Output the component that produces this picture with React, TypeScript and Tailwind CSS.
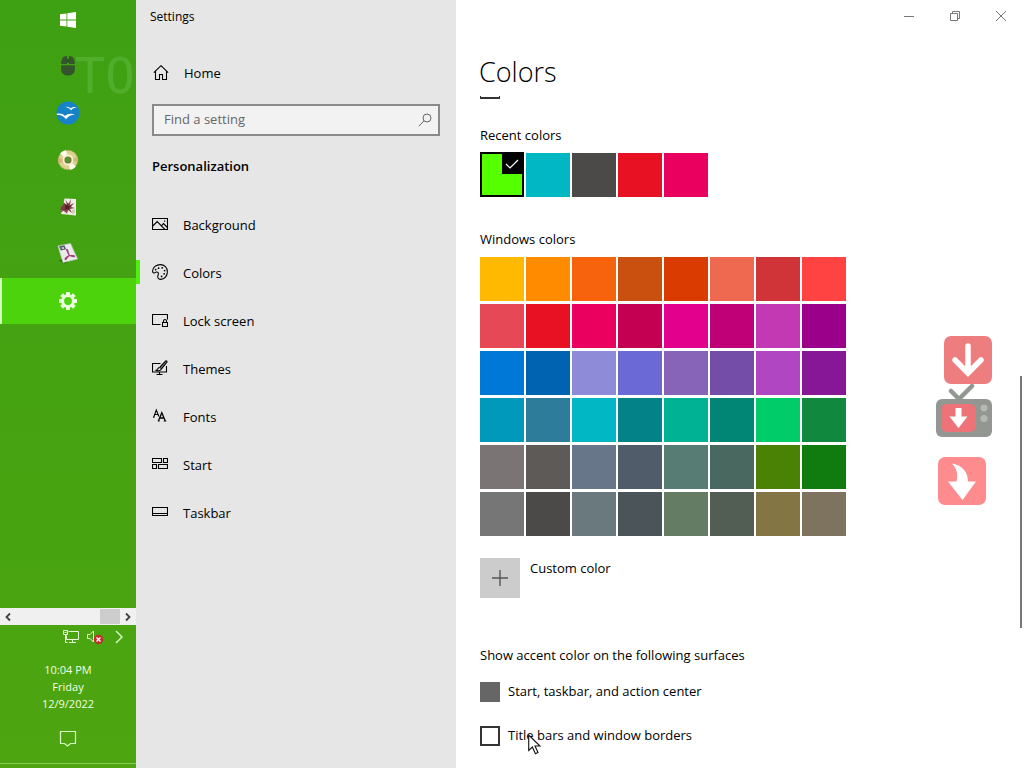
import type { ReactNode } from "react";

const windowsColors = [
  ["Yellow gold", "bg-[#ffb900]"], ["Gold", "bg-[#ff8c00]"], ["Orange bright", "bg-[#f7630c]"], ["Orange dark", "bg-[#ca5010]"],
  ["Rust", "bg-[#da3b01]"], ["Pale rust", "bg-[#ef6950]"], ["Brick red", "bg-[#d13438]"], ["Mod red", "bg-[#ff4343]"],
  ["Pale red", "bg-[#e74856]"], ["Red", "bg-[#e81123]"], ["Rose bright", "bg-[#ea005e]"], ["Rose", "bg-[#c30052]"],
  ["Plum light", "bg-[#e3008c]"], ["Plum", "bg-[#bf0077]"], ["Orchid light", "bg-[#c239b3]"], ["Orchid", "bg-[#9a0089]"],
  ["Default blue", "bg-[#0078d7]"], ["Navy blue", "bg-[#0063b1]"], ["Purple shadow", "bg-[#8e8cd8]"], ["Purple shadow dark", "bg-[#6b69d6]"],
  ["Iris pastel", "bg-[#8764b8]"], ["Iris spring", "bg-[#744da9]"], ["Violet red light", "bg-[#b146c2]"], ["Violet red", "bg-[#881798]"],
  ["Cool blue bright", "bg-[#0099bc]"], ["Cool blue", "bg-[#2d7d9a]"], ["Seafoam", "bg-[#00b7c3]"], ["Seafoam teal", "bg-[#038387]"],
  ["Mint light", "bg-[#00b294]"], ["Mint dark", "bg-[#018574]"], ["Turf green", "bg-[#00cc6a]"], ["Sport green", "bg-[#10893e]"],
  ["Gray", "bg-[#7a7574]"], ["Gray brown", "bg-[#5d5a58]"], ["Steel blue", "bg-[#68768a]"], ["Metal blue", "bg-[#515c6b]"],
  ["Pale moss", "bg-[#567c73]"], ["Moss", "bg-[#486860]"], ["Meadow green", "bg-[#498205]"], ["Green", "bg-[#107c10]"],
  ["Overcast", "bg-[#767676]"], ["Storm", "bg-[#4c4a48]"], ["Blue gray", "bg-[#69797e]"], ["Gray dark", "bg-[#4a5459]"],
  ["Liddy green", "bg-[#647c64]"], ["Sage", "bg-[#525e54]"], ["Camouflage desert", "bg-[#847545]"], ["Camouflage", "bg-[#7e735f]"],
];

const recentColors = [
  ["Seafoam", "bg-[#00b7c3]"],
  ["Storm", "bg-[#4c4a48]"],
  ["Red", "bg-[#e81123]"],
  ["Rose bright", "bg-[#ea005e]"],
];

function Line({ children }: { children: ReactNode }) {
  return (
    <svg width="16" height="16" viewBox="0 0 16 16" fill="none" stroke="currentColor" strokeWidth="1.1" className="mb-1 shrink-0" aria-hidden="true">
      {children}
    </svg>
  );
}

const navItems: [string, ReactNode][] = [
  ["Background", <Line key="i"><path d="M.5 2.5h15v11H.5zM.8 10 5.2 5.6l7.4 7.6M9.3 9.8l2.2-2.2 3.9 3.9" /><path d="M12 4.5h1.2v1.2H12z" fill="currentColor" stroke="none" /></Line>],
  ["Colors", <Line key="i"><path d="M8.4.6C4.300.6.600 3.300.6 7c0 1.800 1.300 2.500 2.400 1.600 1-.9 2.600-.8 3.300.2.700 1.100-.5 2.300-.6 3.600-.1 1.900 1.300 3 3 3 3.800-.1 6.700-3.500 6.700-7.600C15.400 3.800 12.500.6 8.400.6z" /><g fill="currentColor" stroke="none"><circle cx="3.700" cy="5.600" r=".9" /><circle cx="6.600" cy="4.200" r=".9" /><circle cx="10.200" cy="3.800" r=".9" /><circle cx="12.600" cy="6.600" r=".9" /><circle cx="12.200" cy="9.800" r=".9" /><circle cx="9.600" cy="12.400" r=".9" /></g></Line>],
  ["Lock screen", <Line key="i"><path d="M8.500 12.500h-8v-10h15v5" /><path d="M10.500 10.500h5v4h-5zM11.500 10.300V9a1.500 1.500 0 0 1 3 0v1.300" /></Line>],
  ["Themes", <Line key="i"><path d="M8.500 3.500h-8v8.500h14V6M4.500 14.500h6M7.500 12v2.500" /><path d="M14.500.9c.6.3.7.9.4 1.400L9.600 8.800 7.800 7.300l5.500-6c.3-.4.800-.6 1.200-.4z" fill="#777" /><path d="M7.500 7.600C5.800 7.600 6 9.700 4 10.300c1.700.9 4.800.7 5.200-1.200" /></Line>],
  ["Fonts", <Line key="i"><path d="M1.800 9 4.300 2l2.600 6.500M2.700 6.500h3.200M1 9.200h1.500" /><path d="m6.500 12.700 3.300-8 3.400 8M7.800 10h4.300" strokeWidth="1.300" /><path d="M5.800 13h1.900M11.700 13h2.600" /></Line>],
  ["Start", <Line key="i"><path d="M.5 2.500h9v4h-9zM11.500 2.500h4v4h-4zM.5 8.500h4v4h-4zM6.500 8.500h9v4h-9z" /></Line>],
  ["Taskbar", <Line key="i"><path d="M.5 3.500h15v8H.5zM.5 9.500h15" /></Line>],
];

function WindowsLogo() {
  return (
    <svg width="16" height="16" viewBox="0 0 16 16" fill="#fff" aria-hidden="true">
      <path d="M0 2.300 6.500 1.400v6.200H0zM7.300 1.300 16 0v7.600H7.300zM0 8.400h6.500v6.200L0 13.700zM7.300 8.400H16V16l-8.700-1.300z" />
    </svg>
  );
}

function MouseIcon() {
  return (
    <svg width="16" height="20" viewBox="0 0 16 20" aria-hidden="true">
      <path d="M7 0C3 .1 1.300 2.500 1.200 8H7zM9 0v8h5.800C14.700 2.500 13 .1 9 0zM1.200 9.200h13.600v4.300c0 8-13.600 8-13.600 0z" fill="#34542b" />
      <rect x="7" y="2.500" width="2" height="4.500" rx="1" fill="#2f4f28" />
    </svg>
  );
}

function OfficeIcon() {
  return (
    <svg width="24" height="24" viewBox="0 0 24 24" aria-hidden="true">
      <circle cx="12" cy="12" r="11.500" fill="#1683c9" />
      <path d="M9.500 6c2.300-.6 4 .2 5.200 1.500C16.300 6 18.400 5.600 20.500 6.500c-2.200 0-4 .8-5.400 3-1.300-1.800-3-3.200-5.600-3.500zM.7 12.800c3.700-.6 6.300.2 8.200 2.200 2.800-2.400 6.200-2.800 10.100-1.600-4 .2-6.700 1.600-8.900 4.900-2.400-3.200-5.200-4.800-9.100-4.200z" fill="#fff" />
    </svg>
  );
}

function DiscIcon() {
  return (
    <svg width="22" height="22" viewBox="0 0 22 22" aria-hidden="true">
      <circle cx="11" cy="11" r="9.800" fill="#ddd391" stroke="#a9a84e" strokeWidth=".8" />
      <path d="M11 11 3 4.500A10 10 0 0 1 9 1.200zM11 11l8 6.500a10 10 0 0 1-6 3.300z" fill="#fffef0" />
      <path d="M11 11 1.300 9a10 10 0 0 0 .5 5.500zM11 11l9.700-3a10 10 0 0 1 0 5z" fill="#cfb678" />
      <circle cx="11" cy="11" r="5.500" fill="#f5f0cf" />
      <circle cx="11" cy="11" r="2.900" fill="#4d9a20" stroke="#78743e" strokeWidth="1.300" />
    </svg>
  );
}

function FlowerCardIcon() {
  return (
    <svg width="18" height="18" viewBox="0 0 18 18" aria-hidden="true">
      <path d="M5.500.5 17 1v16.500L2 16z" fill="#f0eee7" />
      <path d="M4 4 8 7 6.500 2l3 4L12 1l-1 6 4-2-3 4 4 1-5 1 2 4-4-3-1 4-2-4-5 3 3-4-3-2 4-1z" fill="#83424a" />
      <path d="M1 12 5 5l2 3 3-3-1 4 3 1-4 1-2 4-1-3z" fill="#803a43" />
      <path d="m6 8 2-2 1 2 3 0-2 2 0 2-2-1-2 1z" fill="#54212b" />
      <path d="m13 12 3-1v4l-3 1z" fill="#d3cbb8" />
    </svg>
  );
}

function PdfIcon() {
  return (
    <svg width="22" height="22" viewBox="0 0 22 22" aria-hidden="true">
      <path d="m2 17 5 3.500 4-1.500-1-3z" fill="#275c1b" />
      <path d="m1 3 12.500-2.500 7 15.500L6 19.500z" fill="#e9ecea" stroke="#c3cbc1" strokeWidth=".7" />
      <path d="m2 3.200 5.500-1 1.500 4L3.800 7.500z" fill="#54606e" />
      <path d="m4.500 4.500 2-.4.6 1.600-2 .4z" fill="#d7dfe5" />
      <path d="M9.500 6.500c1.500-.5 1.500 4 3 6 2 .2 5-.5 5 .7 0 1-3.800 0-5-.7-2 .7-3 4.200-4 4.200s-.2-2.700 4-4.200c-1.300-1.500-3-6-3-6z" fill="none" stroke="#a8437a" strokeWidth="1.200" />
    </svg>
  );
}

function GearIcon() {
  return (
    <svg width="20" height="20" viewBox="0 0 20 20" aria-hidden="true">
      <g fill="#e9ffdd">
        <path d="M8 1h4v18H8z" />
        <path d="M8 1h4v18H8z" transform="rotate(45 10 10)" />
        <path d="M8 1h4v18H8z" transform="rotate(90 10 10)" />
        <path d="M8 1h4v18H8z" transform="rotate(135 10 10)" />
        <circle cx="10" cy="10" r="6.800" />
      </g>
      <circle cx="10" cy="10" r="3.900" fill="#4cd30b" />
    </svg>
  );
}

const taskbarApps: [string, ReactNode][] = [
  ["Mouse", <MouseIcon key="i" />],
  ["OpenOffice", <OfficeIcon key="i" />],
  ["Disc", <DiscIcon key="i" />],
  ["Image viewer", <FlowerCardIcon key="i" />],
  ["PDF reader", <PdfIcon key="i" />],
];

function Taskbar() {
  return (
    <aside className="relative flex w-34 shrink-0 flex-col bg-linear-to-b from-[#3ea013] to-[#4da510]">
      <span className="absolute top-11 left-[75px] font-['DejaVu_Sans_Mono',monospace] text-[50px] leading-16 whitespace-nowrap text-[#50ae2c]" aria-hidden="true">TO</span>
      <button aria-label="Start" className="flex h-[43px] items-center justify-center pb-1"><WindowsLogo /></button>
      {taskbarApps.map(([name, icon]) => (
        <button key={name} aria-label={name} className="relative flex h-[47px] items-center justify-center pb-0.5">{icon}</button>
      ))}
      <button aria-label="Settings" className="flex h-[46px] items-center justify-center border-l-2 border-[#d5ffc0] bg-[#4cd30b] pr-0.5"><GearIcon /></button>
      <span className="absolute top-[260px] -right-1 h-6 w-1 bg-[#4ef00f]" aria-hidden="true" />

      <div className="mt-auto flex h-[17px] items-center justify-between bg-[#f0f0f0] px-1 text-[#404040]">
        <button aria-label="Scroll left"><svg width="8" height="10" viewBox="0 0 8 10" fill="none" stroke="currentColor" strokeWidth="1.800"><path d="M6 1.500 2.500 5 6 8.500" /></svg></button>
        <span className="ml-auto h-[15px] w-5 bg-[#cdcdcd]" />
        <button aria-label="Scroll right" className="ml-1"><svg width="8" height="10" viewBox="0 0 8 10" fill="none" stroke="currentColor" strokeWidth="1.800"><path d="M2 1.500 5.500 5 2 8.500" /></svg></button>
      </div>
      <div className="flex h-6 items-center justify-end gap-2 pr-3">
        <button aria-label="Network">
          <svg width="16" height="16" viewBox="0 0 16 16" fill="none" stroke="#e9ffd9"><path d="M5.500 2.500h10v8h-12v-4M.5 1.500h4v4h-4zM2.500 5.500v8h2M9.500 10.500v3M6 13.500h7M1.500 3.500h2" /></svg>
        </button>
        <button aria-label="Volume muted">
          <svg width="17" height="16" viewBox="0 0 17 16"><path d="M.5 5.500H3l3.500-3.500v11L3 9.500H.5z" fill="none" stroke="#e9ffd9" /><circle cx="11.500" cy="10.500" r="4.700" fill="#c72b2e" /><path d="m9.500 8.500 4 4m0-4-4 4" stroke="#fff" strokeWidth="1.400" /></svg>
        </button>
        <button aria-label="Hidden icons" className="pl-0.5">
          <svg width="10" height="14" viewBox="0 0 10 14" fill="none" stroke="#d9ffc4" strokeWidth="1.400"><path d="m2 1 6 6-6 6" /></svg>
        </button>
      </div>
      <div className="pt-3 text-center text-[11px] leading-[17px] text-[#f0ffe6]">
        <p>10:04 PM</p>
        <p>Friday</p>
        <p>12/9/2022</p>
      </div>
      <button aria-label="Notifications" className="mt-[18px] self-center">
        <svg width="18" height="18" viewBox="0 0 18 18" fill="none" stroke="#d9ffc4" strokeWidth="1.200"><path d="M1.500 1.500h15v12h-5L8.500 16l-3-2.500h-4z" /></svg>
      </button>
      <div className="mt-[15px] mb-1 h-px bg-[#86cc56]" />
    </aside>
  );
}

function SettingsNav() {
  return (
    <nav className="flex w-80 shrink-0 flex-col bg-[#e6e6e6] px-4 text-[13px]">
      <p className="-ml-0.5 pt-2 text-xs leading-[18px]">Settings</p>
      <a href="#home" className="mt-7 flex h-10 items-center gap-[15px] pl-px">
        <svg className="mb-0.5" width="16" height="16" viewBox="0 0 16 16" fill="none" stroke="currentColor" strokeWidth="1.100" aria-hidden="true"><path d="m.8 7.700 7.200-7 7.200 7M2.500 6v8.500h4v-5h3v5h4V6" /></svg>
        Home
      </a>
      <div className="mt-2.5 flex h-8 items-center border-2 border-[#8a8a8a] bg-[#f2f2f2] pr-1.5 pl-2.5">
        <input aria-label="Find a setting" placeholder="Find a setting" className="min-w-0 flex-1 bg-transparent outline-none placeholder:text-[#666]" />
        <svg width="14" height="14" viewBox="0 0 14 14" fill="none" stroke="#666" aria-hidden="true"><circle cx="9" cy="5" r="4" /><path d="M6 8 .8 13.200" /></svg>
      </div>
      <h2 className="mt-5 leading-5 font-semibold">Personalization</h2>
      <ul className="mt-[26px]">
        {navItems.map(([label, icon]) => (
          <li key={label}>
            <a href={`#${label}`} className="flex h-12 items-center gap-[15px]">{icon}{label}</a>
          </li>
        ))}
      </ul>
    </nav>
  );
}

function DownloadBadges() {
  return (
    <div className="absolute top-[336px] right-8 flex w-14 flex-col items-end" aria-hidden="true">
      <svg width="48" height="48" viewBox="0 0 48 48"><rect width="48" height="48" rx="7" fill="#ee7d80" /><path d="M24 10v27M11 24l13 13 13-13" fill="none" stroke="#fff" strokeWidth="5.500" strokeLinecap="round" /></svg>
      <svg width="56" height="54" viewBox="0 0 56 54">
        <path d="m15 7 8 8L36 2" fill="none" stroke="#929792" strokeWidth="4.500" strokeLinecap="round" />
        <rect y="15" width="56" height="38" rx="6" fill="#929792" />
        <rect x="5" y="20" width="35" height="28" rx="6" fill="#ed7378" />
        <path d="M19.500 24h6v8.500h6L22.500 44l-9-11.500h6z" fill="#fff" />
        <circle cx="48" cy="24" r="3.500" fill="#b4b9b4" /><circle cx="48" cy="34.500" r="3.500" fill="#b4b9b4" />
      </svg>
      <svg className="mt-[19px] mr-1.5" width="48" height="48" viewBox="0 0 48 48"><rect width="48" height="48" rx="7" fill="#fe8c8f" /><path d="M14 6.500C23 8 30 14 30 24.500h8L24.500 43 10 24.500h8.500C20 17 19 12 14 6.500z" fill="#fff" /></svg>
    </div>
  );
}

function ColorsPage() {
  return (
    <main className="relative min-w-0 flex-1 bg-white pl-6 text-[13px]">
      <div className="flex h-8 items-center justify-end gap-9 pr-[18px] text-[#777]">
        <button aria-label="Minimize"><svg width="10" height="10" viewBox="0 0 10 10" stroke="currentColor"><path d="M0 5.500h10" /></svg></button>
        <button aria-label="Restore"><svg width="10" height="10" viewBox="0 0 10 10" fill="none" stroke="currentColor"><path d="M.5 2.500h7v7h-7zM2.500 2V.5h7v7H8" /></svg></button>
        <button aria-label="Close"><svg width="10" height="10" viewBox="0 0 10 10" stroke="currentColor"><path d="m0 0 10 10M10 0 0 10" /></svg></button>
      </div>

      <h1 className="mt-5 -ml-px text-[27px] leading-10 font-light">Colors</h1>
      <div className="mt-1 h-[3px] w-5 border-x border-b-2 border-[#333]" />

      <h3 className="mt-[26px] leading-5">Recent colors</h3>
      <div className="mt-[7px] flex h-[45px] items-end gap-0.5">
        <button aria-label="Current color" className="flex h-[45px] w-11 justify-end border-2 border-black bg-[#55ff00]">
          <span className="flex h-5 w-5 items-center justify-center bg-black">
            <svg width="14" height="12" viewBox="0 0 14 12" fill="none" stroke="#fff" strokeWidth="1.200"><path d="m1 6 4 4 8-8" /></svg>
          </span>
        </button>
        {recentColors.map(([name, color]) => <button key={name} aria-label={name} className={`h-11 w-11 ${color}`} />)}
      </div>

      <h3 className="mt-8 leading-5">Windows colors</h3>
      <div className="mt-2 grid w-fit grid-cols-8 gap-x-0.5 gap-y-[3px]">
        {windowsColors.map(([name, color]) => <button key={name} aria-label={name} className={`h-11 w-11 ${color}`} />)}
      </div>

      <button className="mt-[22px] flex gap-2.5">
        <span className="flex h-10 w-10 items-center justify-center bg-[#ccc]">
          <svg width="16" height="16" viewBox="0 0 16 16" stroke="#555" strokeWidth="1.400"><path d="M8 0v16M0 8h16" /></svg>
        </span>
        <span className="leading-5">Custom color</span>
      </button>

      <h3 className="mt-[47px] leading-5">Show accent color on the following surfaces</h3>
      <label className="mt-[17px] flex h-5 items-center gap-2">
        <input type="checkbox" disabled className="h-5 w-5 appearance-none bg-[#666]" />
        Start, taskbar, and action center
      </label>
      <label className="relative mt-6 flex h-5 w-fit items-center gap-2">
        <input type="checkbox" className="h-5 w-5 appearance-none border-2 border-[#333] bg-white" />
        Title bars and window borders
        <svg className="absolute top-2 left-12" width="14" height="21" viewBox="0 0 14 21" aria-hidden="true"><path d="M.7 1v15.500l3.700-3.500 3 6.800 2.600-1.200-3-6.600h5z" fill="#fff" stroke="#111" strokeWidth="1.100" /></svg>
      </label>

      <DownloadBadges />
      <div className="absolute top-[376px] right-0.5 h-[252px] w-0.5 bg-[#777]" />
    </main>
  );
}

export default function App() {
  return (
    <div className="flex min-h-screen overflow-hidden bg-white font-['Open_Sans',sans-serif] text-black">
      <Taskbar />
      <SettingsNav />
      <ColorsPage />
    </div>
  );
}
